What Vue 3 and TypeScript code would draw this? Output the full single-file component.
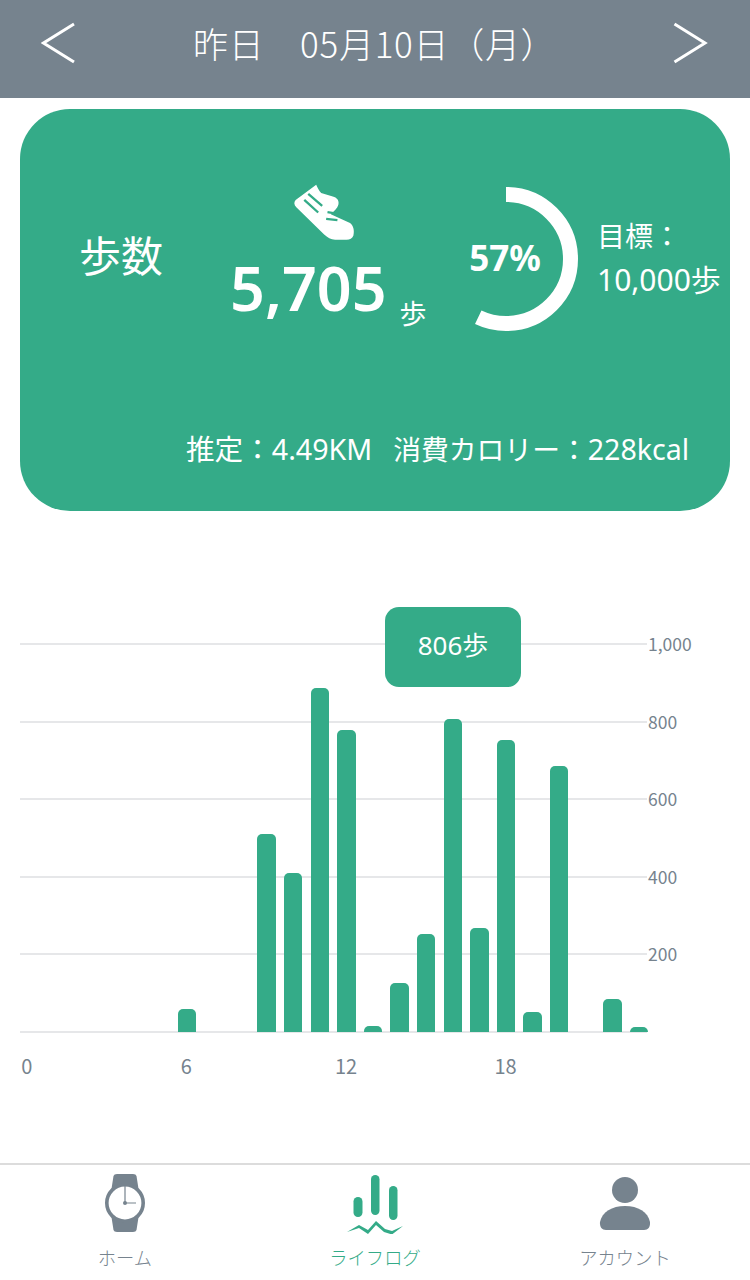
<script setup lang="ts">
const ticks = ['1,000', '800', '600', '400', '200', '']
const heights: number[] = [0, 0, 0, 0, 0, 0, 23, 0, 0, 198, 159, 344, 302, 6, 49, 98, 313, 104, 292, 20, 266, 0, 33, 5]
const hours = ['0', '6', '12', '18']
</script>

<template>
  <div class="page">
    <header class="top">
      <svg class="arrow" width="36" height="42" viewBox="0 0 36 42"><path d="M33 2 L2.500 21 L33 40" fill="none" stroke="#fff" stroke-width="3" /></svg>
      <div class="date">昨日　05月10日（月）</div>
      <svg class="arrow" width="36" height="42" viewBox="0 0 36 42"><path d="M1.500 2 L32 21 L1.500 40" fill="none" stroke="#fff" stroke-width="3" /></svg>
    </header>

    <section class="card">
      <div class="card-top">
        <div class="label">歩数</div>
        <div class="steps">
          <svg class="shoe" width="67" height="63" viewBox="210 30 200 190">
            <path d="M288 44 C291 52 297 62 303 69 L338 80 C350 83 358 92 355 104 C352 116 343 122 332 133 L390 160 C400 168 404 182 400 198 C396 208 388 211 375 210 L345 210 C332 209 322 203 312 194 L228 112 C221 105 220 96 226 90 Z" fill="#fff" />
            <path d="M252 90 L294 128 M264 72 L306 108 M322 127 L354 132 M318 147 L352 151" fill="none" stroke="#34ab88" stroke-width="7" />
          </svg>
          <div class="count"><span class="num">5,705</span><span class="unit">歩</span></div>
        </div>
        <div class="ring">
          <svg width="146" height="146" viewBox="0 0 146 146">
            <circle cx="73" cy="73" r="64.5" fill="none" stroke="#fff" stroke-width="15" stroke-dasharray="231 405.3" transform="rotate(-90 73 73)" />
          </svg>
          <span class="pct">57%</span>
        </div>
        <div class="goal">
          <div class="goal-label">目標：</div>
          <div>10,000歩</div>
        </div>
      </div>
      <div class="card-bottom">
        <span>推定：4.49KM</span>
        <span class="burn"><span class="burn-label">消費カロリー：</span>228kcal</span>
      </div>
    </section>

    <section class="chart">
      <div class="tooltip">806歩</div>
      <div class="rows">
        <div v-for="(t, i) in ticks" :key="i" class="row">
          <div class="line"></div>
          <div class="tick">{{ t }}</div>
        </div>
      </div>
      <div class="bars">
        <div v-for="(h, i) in heights" :key="i" class="slot">
          <div v-if="h" class="bar" :style="{ height: h + 'px' }"></div>
        </div>
      </div>
      <div class="hours">
        <span v-for="h in hours" :key="h" class="hour">{{ h }}</span>
      </div>
    </section>

    <nav class="tabs">
      <div class="tab">
        <svg width="44" height="62" viewBox="0 0 44 62">
          <path d="M8 20 L10.500 4 Q11 2 14 2 L30 2 Q33 2 33.500 4 L36 20 Z M8 42 L10.500 58 Q11 60 14 60 L30 60 Q33 60 33.500 58 L36 42 Z" fill="#76838e" />
          <circle cx="22" cy="31" r="18.2" fill="#fff" stroke="#76838e" stroke-width="3.600" />
          <path d="M22 31 V14 M22 31 H33" stroke="#76838e" stroke-width="1.200" />
          <circle cx="22" cy="31" r="2" fill="#76838e" />
        </svg>
        <span>ホーム</span>
      </div>
      <div class="tab active">
        <svg width="60" height="62" viewBox="0 0 60 62">
          <rect x="8.500" y="25" width="9" height="20" rx="4.500" fill="#34ab88" />
          <rect x="26" y="3" width="8.500" height="40" rx="4.200" fill="#34ab88" />
          <rect x="44" y="14" width="8.500" height="34" rx="4.200" fill="#34ab88" />
          <path d="M2 60 L14 53 L23 58 L31 49 L40 57 L47 59 L58 54 L47 62.500 L39 60 L31 53 L23 62 L14 56 Z" fill="#34ab88" />
        </svg>
        <span>ライフログ</span>
      </div>
      <div class="tab">
        <svg width="52" height="62" viewBox="0 0 52 62">
          <circle cx="26" cy="18" r="13" fill="#76838e" />
          <path d="M1 50 C3 40 13 34 26 34 C39 34 49 40 51 50 C51.500 55 49 58 45 58 L7 58 C3 58 0.500 55 1 50 Z" fill="#76838e" />
        </svg>
        <span>アカウント</span>
      </div>
    </nav>
  </div>
</template>

<style>
html, body { margin: 0; background: #fff; }
</style>

<style scoped>
.page {
  position: relative;
  width: 750px;
  height: 1280px;
  display: flex;
  flex-direction: column;
  overflow: hidden;
  font-family: "Noto Sans", "Noto Sans CJK JP", sans-serif;
  color: #76838e;
}
.top {
  height: 98px;
  flex: none;
  box-sizing: border-box;
  background: #76838e;
  padding: 0 41px 12px;
  display: flex;
  align-items: center;
}
.date {
  color: #fff;
  font-family: "Noto Sans CJK JP", sans-serif;
  font-size: 35px;
  line-height: 44px;
  font-weight: 300;
  letter-spacing: 0.7px;
  flex: 1;
  padding-left: 116px;
  white-space: nowrap;
}
.card {
  margin: 11px 20px 0;
  height: 402px;
  flex: none;
  border-radius: 50px;
  background: #34ab88;
  color: #fff;
  display: flex;
  flex-direction: column;
  justify-content: space-between;
  padding: 74px 0 44px;
  box-sizing: border-box;
}
.card-top {
  display: flex;
  align-items: flex-start;
  padding-left: 60px;
  height: 160px;
}
.label {
  font-family: "Noto Sans CJK JP", sans-serif;
  font-size: 42px;
  line-height: 50px;
  width: 151px;
  flex: none;
  margin-top: 46px;
  margin-left: -1px;
}
.steps {
  width: 238px;
  flex: none;
  display: flex;
  flex-direction: column;
  align-items: flex-start;
}
.shoe { margin: -3px 0 0 60px; }
.count { display: flex; align-items: flex-end; margin-top: 10px; }
.num { font-size: 61px; line-height: 70px; font-weight: 600; }
.unit {
  font-family: "Noto Sans CJK JP", sans-serif;
  font-size: 27px;
  line-height: 30px;
  margin: 0 0 -5px 13px;
}
.ring {
  position: relative;
  width: 146px;
  height: 146px;
  flex: none;
  margin-left: -35px;
  margin-top: 3px;
}
.ring svg { display: block; }
.pct {
  position: absolute;
  inset: 0;
  display: flex;
  align-items: center;
  justify-content: center;
  font-size: 35px;
  font-weight: 700;
  padding: 0 2px 4px 0;
}
.goal {
  font-size: 30px;
  line-height: 43px;
  margin-left: 18px;
  margin-top: 32px;
  white-space: nowrap;
  flex: none;
}
.goal-label { font-size: 28px; }
.card-bottom {
  font-size: 28.600px;
  line-height: 36px;
  padding-left: 166px;
  white-space: nowrap;
  display: flex;
}
.burn { margin-left: 21px; }
.burn-label { font-size: 27.800px; }
.chart {
  position: relative;
  margin-top: 94px;
  height: 500px;
  flex: none;
}
.tooltip {
  position: absolute;
  left: 385px;
  top: 2px;
  width: 136px;
  height: 80px;
  border-radius: 14px;
  background: #34ab88;
  color: #fff;
  font-size: 26px;
  display: flex;
  align-items: center;
  justify-content: center;
  padding-bottom: 6px;
  box-sizing: border-box;
  z-index: 2;
}
.rows {
  padding: 0 0 0 20px;
  display: flex;
  flex-direction: column;
  margin-top: 38px;
}
.row {
  height: 77.600px;
  display: flex;
  align-items: flex-start;
}
.line {
  width: 627px;
  height: 2px;
  background: #e6e7e9;
  flex: none;
}
.tick {
  font-family: "Noto Sans CJK JP", sans-serif;
  font-size: 17.500px;
  line-height: 22px;
  margin-top: -10px;
  margin-left: 1px;
}
.bars {
  position: absolute;
  left: 14px;
  top: 38px;
  height: 389px;
  display: flex;
  align-items: flex-end;
}
.slot {
  width: 26.600px;
  height: 100%;
  display: flex;
  align-items: flex-end;
  justify-content: center;
}
.bar {
  width: 18.500px;
  background: #34ab88;
  border-radius: 5px 5px 0 0;
}
.hours {
  position: absolute;
  left: -53px;
  top: 448px;
  display: flex;
}
.hour {
  width: 159.600px;
  font-family: "Noto Sans CJK JP", sans-serif;
  font-size: 20px;
  line-height: 26px;
  text-align: center;
}
.tabs {
  position: absolute;
  left: 0;
  top: 1163px;
  width: 750px;
  height: 117px;
  border-top: 2px solid #dcdcdc;
  box-sizing: border-box;
  display: grid;
  grid-template-columns: repeat(3, 250px);
  padding-top: 7px;
}
.tab {
  display: flex;
  flex-direction: column;
  align-items: center;
  font-size: 18.300px;
  line-height: 24px;
  font-family: "Noto Sans CJK JP", sans-serif;
  font-weight: 300;
}
.tab svg { margin-bottom: 11px; }
.tab.active { color: #34ab88; }
</style>
